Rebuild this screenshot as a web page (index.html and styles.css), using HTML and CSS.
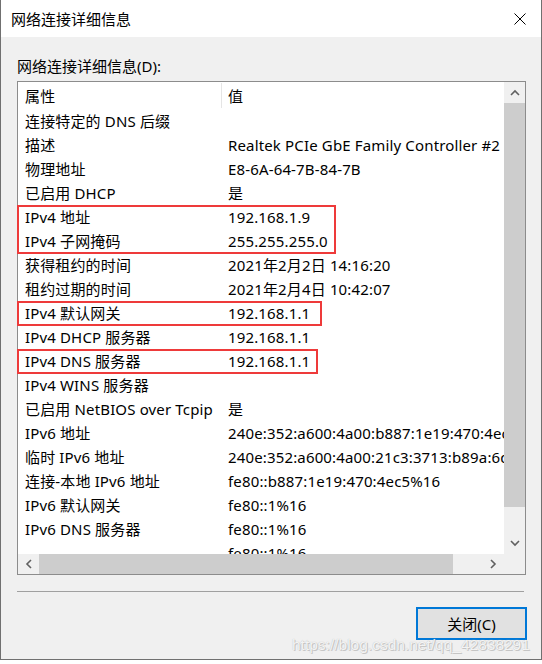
FILE: index.html
```html
<!DOCTYPE html>
<html lang="zh-CN">
<head>
<meta charset="utf-8">
<title>网络连接详细信息</title>
<link rel="stylesheet" href="styles.css">
</head>
<body>
<div class="window">
  <div class="titlebar">
    <span class="title">网络连接详细信息</span>
    <svg class="close" width="12" height="12" viewBox="0 0 12 12"><path d="M0.5 0.5 L11.5 11.5 M11.5 0.5 L0.5 11.5" stroke="#000" stroke-width="1" fill="none"/></svg>
  </div>
  <div class="content">
    <div class="label">网络连接详细信息(D):</div>
    <div class="listbox">
      <div class="view">
        <div class="header"><div class="hc">属性</div><div class="hc hv">值</div></div>
        <div class="row"><div class="k">连接特定的 DNS 后缀</div><div class="v"></div></div>
        <div class="row"><div class="k">描述</div><div class="v">Realtek PCIe GbE Family Controller #2</div></div>
        <div class="row"><div class="k">物理地址</div><div class="v">E8-6A-64-7B-84-7B</div></div>
        <div class="row"><div class="k">已启用 DHCP</div><div class="v">是</div></div>
        <div class="row"><div class="k">IPv4 地址</div><div class="v">192.168.1.9</div></div>
        <div class="row"><div class="k">IPv4 子网掩码</div><div class="v">255.255.255.0</div></div>
        <div class="row"><div class="k">获得租约的时间</div><div class="v">2021年2月2日 14:16:20</div></div>
        <div class="row"><div class="k">租约过期的时间</div><div class="v">2021年2月4日 10:42:07</div></div>
        <div class="row"><div class="k">IPv4 默认网关</div><div class="v">192.168.1.1</div></div>
        <div class="row"><div class="k">IPv4 DHCP 服务器</div><div class="v">192.168.1.1</div></div>
        <div class="row"><div class="k">IPv4 DNS 服务器</div><div class="v">192.168.1.1</div></div>
        <div class="row"><div class="k">IPv4 WINS 服务器</div><div class="v"></div></div>
        <div class="row"><div class="k">已启用 NetBIOS over Tcpip</div><div class="v">是</div></div>
        <div class="row"><div class="k">IPv6 地址</div><div class="v">240e:352:a600:4a00:b887:1e19:470:4ec5</div></div>
        <div class="row"><div class="k">临时 IPv6 地址</div><div class="v">240e:352:a600:4a00:21c3:3713:b89a:6d2e</div></div>
        <div class="row"><div class="k">连接-本地 IPv6 地址</div><div class="v">fe80::b887:1e19:470:4ec5%16</div></div>
        <div class="row"><div class="k">IPv6 默认网关</div><div class="v">fe80::1%16</div></div>
        <div class="row"><div class="k">IPv6 DNS 服务器</div><div class="v">fe80::1%16</div></div>
        <div class="row"><div class="k"></div><div class="v">fe80::1%16</div></div>
      </div>
      <div class="vscroll">
        <div class="sbtn"><svg width="10" height="7" viewBox="0 0 10 7"><path d="M1 6 L5 2 L9 6" stroke="#606060" stroke-width="1.6" fill="none"/></svg></div>
        <div class="vthumb"></div>
        <div class="track"></div>
        <div class="sbtn"><svg width="10" height="7" viewBox="0 0 10 7"><path d="M1 1 L5 5 L9 1" stroke="#606060" stroke-width="1.6" fill="none"/></svg></div>
      </div>
      <div class="hscroll">
        <div class="sbtn"><svg width="7" height="10" viewBox="0 0 7 10"><path d="M6 1 L2 5 L6 9" stroke="#606060" stroke-width="1.6" fill="none"/></svg></div>
        <div class="hthumb"></div>
        <div class="track"></div>
        <div class="sbtn"><svg width="7" height="10" viewBox="0 0 7 10"><path d="M1 1 L5 5 L1 9" stroke="#606060" stroke-width="1.6" fill="none"/></svg></div>
      </div>
      <div class="corner"></div>
      <div class="mark mark-ip"></div>
      <div class="mark mark-gw"></div>
      <div class="mark mark-dns"></div>
    </div>
    <div class="sep"></div>
    <div class="actions"><button class="btn">关闭(C)</button></div>
  </div>
  <div class="watermark">https://blog.csdn.net/qq_42838291</div>
</div>
</body>
</html>
```

FILE: styles.css
```css
html, body {
  margin: 0;
  padding: 0;
  background: #ffffff;
}

body {
  font-family: "Noto Sans", "Noto Sans CJK SC", sans-serif;
  font-size: 15px;
  color: #000;
}

.window {
  position: relative;
  width: 542px;
  height: 660px;
  box-sizing: border-box;
  border-left: 1px solid #707070;
  border-right: 1px solid #707070;
  border-bottom: 1px solid #707070;
  background: #f0f0f0;
}

.titlebar {
  height: 37px;
  background: #ffffff;
  display: flex;
  align-items: center;
  justify-content: space-between;
  padding: 0 15px 0 10px;
}

.title {
  line-height: 20px;
}

.close {
  display: block;
}

.content {
  padding: 19px 14px 0 16px;
}

.label {
  line-height: 20px;
  margin-bottom: 5px;
}

.listbox {
  position: relative;
  width: 507px;
  border: 1px solid #8c8c8c;
  background: #ffffff;
  display: grid;
  grid-template-columns: 486px 21px;
  grid-template-rows: 472px 20px;
}

.view {
  overflow: hidden;
  white-space: nowrap;
  letter-spacing: 0.15px;
}

.header {
  display: grid;
  grid-template-columns: 203px 1fr;
  height: 27px;
  align-items: center;
}

.hc {
  padding-left: 7px;
  line-height: 24px;
  padding-top: 1px;
}

.hv {
  border-left: 1px solid #e5e5e5;
  padding-left: 6px;
}

.row {
  display: grid;
  grid-template-columns: 203px 1fr;
  height: 24px;
  line-height: 24px;
}

.k {
  padding-left: 7px;
  overflow: hidden;
}

.v {
  padding-left: 7px;
}

.vscroll {
  background: #f0f0f0;
  display: flex;
  flex-direction: column;
}

.hscroll {
  background: #f0f0f0;
  display: flex;
}

.sbtn {
  flex: 0 0 21px;
  display: flex;
  align-items: center;
  justify-content: center;
}

.vthumb {
  height: 404px;
  background: #cdcdcd;
}

.hthumb {
  width: 414px;
  background: #cdcdcd;
}

.track {
  flex: 1;
}

.corner {
  background: #f0f0f0;
}

.mark {
  position: absolute;
  left: -1px;
  box-sizing: border-box;
  border: 2px solid #ee3a3a;
}

.mark-ip {
  top: 123px;
  width: 319px;
  height: 49px;
}

.mark-gw {
  top: 219px;
  width: 305px;
  height: 25px;
}

.mark-dns {
  top: 267px;
  width: 301px;
  height: 25px;
}

.sep {
  width: 507px;
  height: 1px;
  background: #a0a0a0;
  margin-top: 16px;
}

.actions {
  display: flex;
  justify-content: flex-end;
  padding-top: 15px;
}

.btn {
  width: 111px;
  height: 33px;
  box-sizing: border-box;
  border: 2px solid #0078d7;
  background: #e1e1e1;
  font-family: "Noto Sans", "Noto Sans CJK SC", sans-serif;
  font-size: 15px;
  color: #000;
  padding: 0;
}

.watermark {
  position: absolute;
  left: 291px;
  top: 636px;
  font-family: "Liberation Sans", Arial, sans-serif;
  font-size: 15.5px;
  line-height: 18px;
  color: rgba(255, 255, 255, 0.85);
  text-shadow: 0 0 1px #b0b0b0, 1px 1px 0 #c8c8c8;
  white-space: nowrap;
}
```
